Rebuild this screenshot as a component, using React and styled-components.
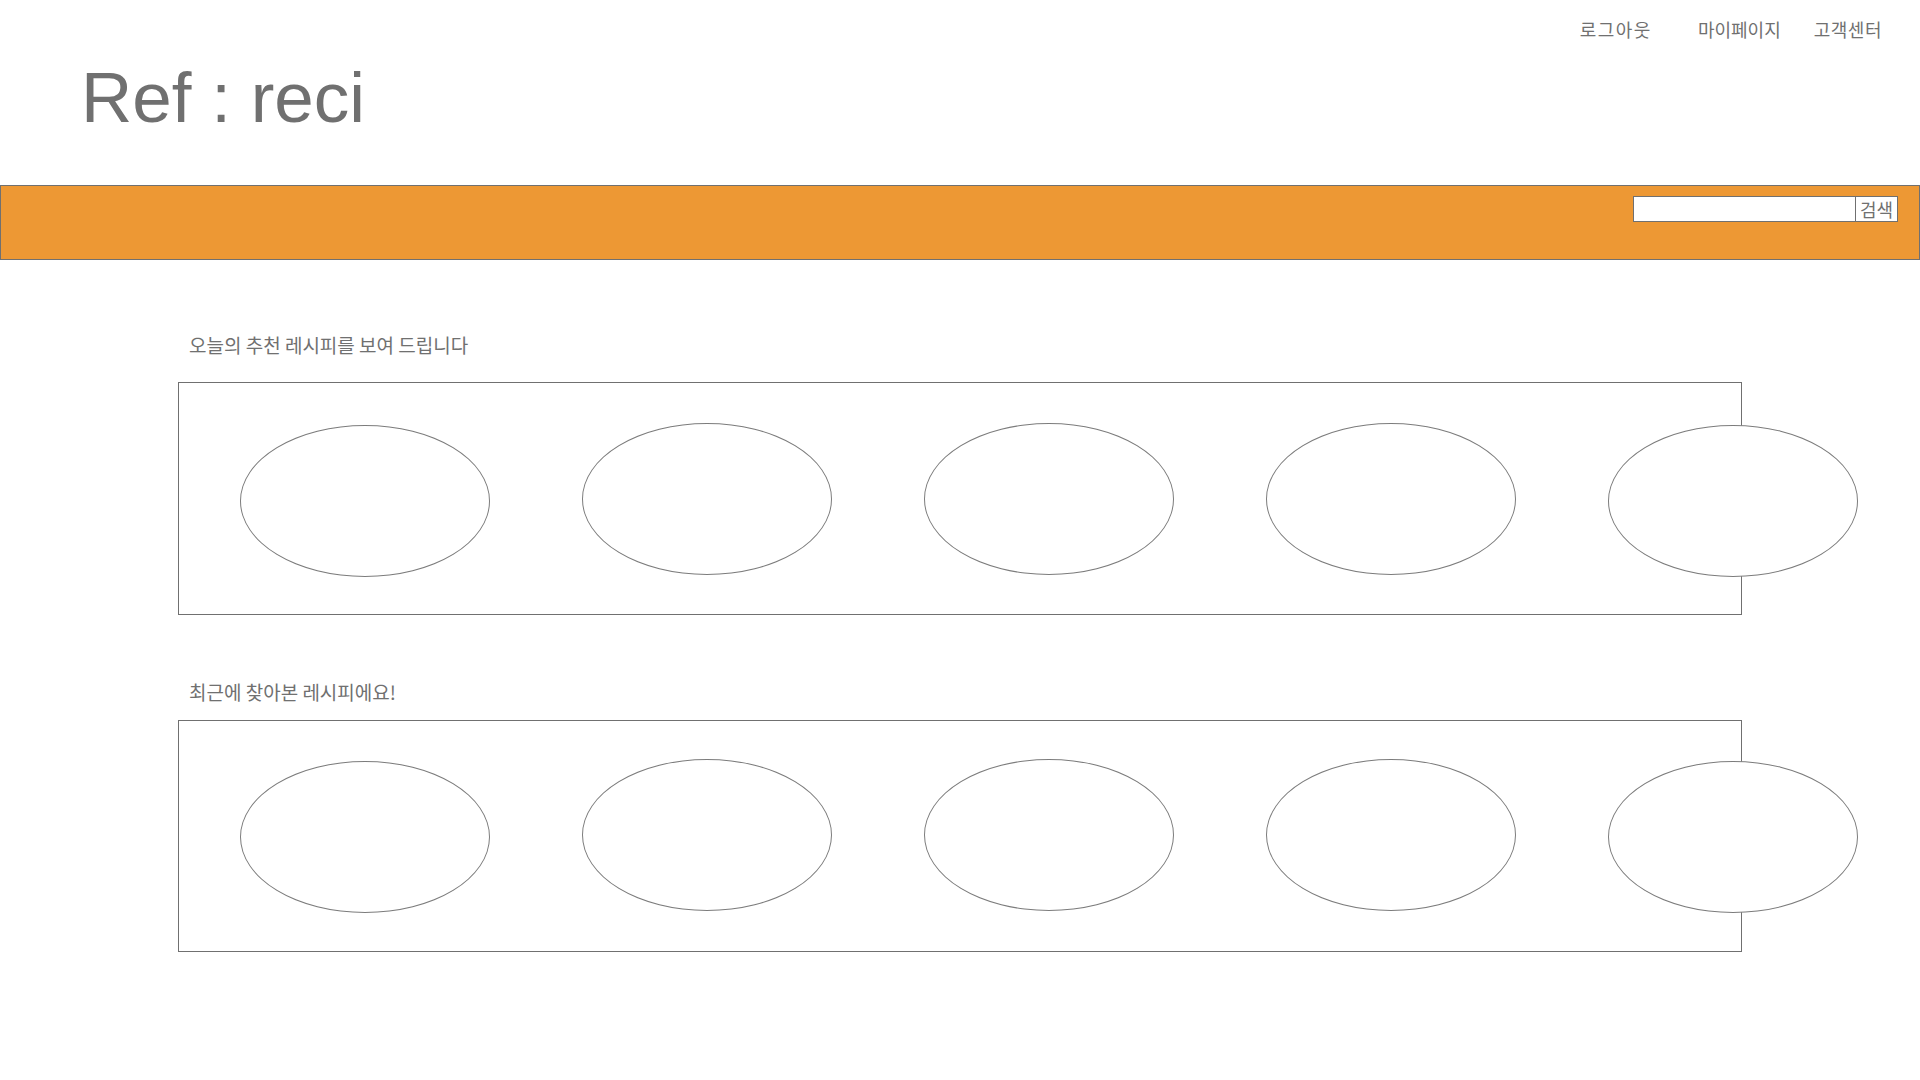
import React from "react";
import styled, { createGlobalStyle } from "styled-components";

const GlobalStyle = createGlobalStyle`
  body {
    margin: 0;
    background: #ffffff;
    font-family: "Noto Sans CJK KR", "Liberation Sans", sans-serif;
    color: #707070;
  }
`;

const Page = styled.div`
  width: 1920px;
  min-height: 1080px;
  background: #ffffff;
`;

const TopNav = styled.nav`
  display: flex;
  justify-content: flex-end;
  height: 40px;
  padding: 19px 38px 0 0;
  box-sizing: border-box;
`;

const NavItem = styled.a`
  margin-left: ${(p) => p.$gap || 0}px;
  font-size: 18px;
  line-height: 21px;
  letter-spacing: ${(p) => p.$spacing || 0}px;
  color: #707070;
  text-decoration: none;
  cursor: pointer;
`;

const Title = styled.h1`
  margin: 23px 0 0;
  padding-left: 81px;
  font-family: "Liberation Sans", Arial, sans-serif;
  font-weight: 400;
  font-size: 71px;
  line-height: 70px;
  color: #707070;
`;

const SearchBar = styled.div`
  margin-top: 52px;
  height: 75px;
  box-sizing: border-box;
  background: #ed9834;
  border: 1px solid #707070;
  display: flex;
  justify-content: flex-end;
  align-items: flex-start;
  padding: 10px 21px 0 0;
`;

const SearchInput = styled.input`
  width: 223px;
  height: 26px;
  box-sizing: border-box;
  border: 1px solid #707070;
  background: #ffffff;
  padding: 0 4px;
  outline: none;
`;

const SearchButton = styled.button`
  width: 42px;
  height: 26px;
  box-sizing: border-box;
  border: 1px solid #707070;
  border-left: none;
  background: #ffffff;
  color: #707070;
  font-family: "Noto Sans CJK KR", sans-serif;
  font-size: 18px;
  line-height: 22px;
  padding: 0;
  cursor: pointer;
`;

const Main = styled.main`
  padding-left: 178px;
`;

const Section = styled.section`
  margin-top: ${(p) => p.$top}px;
`;

const Label = styled.h2`
  margin: 0 0 ${(p) => p.$below}px;
  padding-left: 11px;
  font-size: 19px;
  line-height: 24px;
  font-weight: 400;
  color: #707070;
`;

const RecipeBox = styled.div`
  width: 1564px;
  height: ${(p) => p.$height}px;
  box-sizing: border-box;
  border: 1px solid #707070;
  display: flex;
  align-items: flex-start;
  gap: 92px;
  padding: ${(p) => p.$padTop}px 0 0 61px;
`;

const Thumb = styled.div`
  flex: none;
  width: 250px;
  height: 152px;
  box-sizing: border-box;
  border: 1px solid #7c7c7c;
  border-radius: 50%;
  background: #ffffff;
  margin-top: ${(p) => p.$shift || 0}px;
`;

const shifts = [0, -2, -2, -2, 0];

const RecipeRow = ({ height, padTop }) => (
  <RecipeBox $height={height} $padTop={padTop}>
    {shifts.map((s, i) => (
      <Thumb key={i} $shift={s} />
    ))}
  </RecipeBox>
);

export default function App() {
  return (
    <Page>
      <GlobalStyle />
      <TopNav>
        <NavItem $spacing={1.5}>로그아웃</NavItem>
        <NavItem $gap={46}>마이페이지</NavItem>
        <NavItem $gap={33} $spacing={0.5}>고객센터</NavItem>
      </TopNav>
      <Title>Ref : reci</Title>
      <SearchBar>
        <SearchInput type="text" />
        <SearchButton>검색</SearchButton>
      </SearchBar>
      <Main>
        <Section $top={73}>
          <Label $below={25}>오늘의 추천 레시피를 보여 드립니다</Label>
          <RecipeRow height={233} padTop={42} />
        </Section>
        <Section $top={65}>
          <Label $below={16}>최근에 찾아본 레시피에요!</Label>
          <RecipeRow height={232} padTop={40} />
        </Section>
      </Main>
    </Page>
  );
}
